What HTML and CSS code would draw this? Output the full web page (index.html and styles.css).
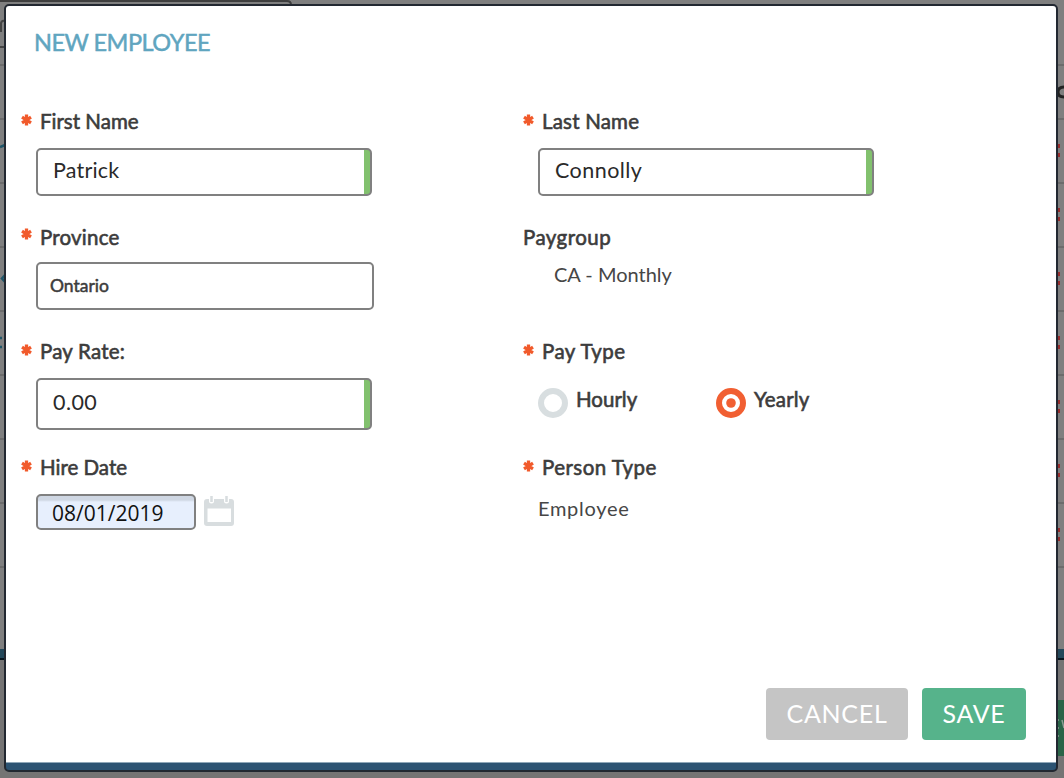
FILE: index.html
```html
<!DOCTYPE html>
<html lang="en">
<head>
<meta charset="utf-8">
<title>New Employee</title>
<link rel="stylesheet" href="styles.css">
</head>
<body>
<svg class="symbols" aria-hidden="true">
  <symbol id="star" viewBox="0 0 11 12"><path d="M5.500 .5v11M1 3.200l9 5.600M10 3.200l-9 5.600" stroke="#f15a2b" stroke-width="3.300" fill="none"/></symbol>
</svg>

<svg class="backdrop" width="1064" height="778" aria-hidden="true">
  <rect width="1064" height="778" fill="#7f7f7f"/>
  <rect y="658" width="1064" height="120" fill="#757474"/>
  <path d="M0 1H287Q291 1 291 5" stroke="#3e3e3e" stroke-width="2" fill="none"/>
  <path d="M0 47H8" stroke="#444" stroke-width="2"/>
  <path d="M0 65H1064M0 119H1064M0 183H1064M0 247H1064M0 311H1064M0 375H1064M0 439H1064M0 503H1064M0 567H1064" stroke="#6c6c6c" stroke-width="2"/>
  <path d="M1 32V23Q2 20 5 21" stroke="#444" stroke-width="2" fill="none"/>
  <path d="M0 147L5 145M6 274L2 278.500L6 283" stroke="#1f5568" stroke-width="2.500" fill="none"/>
  <path d="M0 338h2M0 347h2" stroke="#1f5568" stroke-width="2.500"/>
  <path d="M1064 87Q1058 87 1058 92T1064 97" stroke="#222" stroke-width="3" fill="none"/>
  <path d="M1058 146h2M1058 155h2M1058 210h2M1058 219h2M1058 274h2M1058 283h2M1058 338h2M1058 347h2M1058 402h2M1058 411h2M1058 466h2M1058 475h2M1058 530h2M1058 539h2" stroke="#962d2d" stroke-width="4"/>
  <rect y="649" width="1064" height="9" fill="#23485a"/>
  <rect y="658" width="1064" height="2" fill="#07151e"/>
  <rect x="1050" y="700" width="14" height="56" fill="#2a6448"/>
  <path d="M1058 720h1M1058 728h1M1058 736h1M1062 720l2 8" stroke="#8b9b93" stroke-width="1.500"/>
</svg>

<main class="dialog">
  <h1 class="title">NEW EMPLOYEE</h1>
  <form class="form">
    <div class="field">
      <div class="label"><svg class="star"><use href="#star"/></svg><span>First Name</span></div>
      <div class="input valid"><span class="track-s">Patrick</span></div>
    </div>
    <div class="field">
      <div class="label"><svg class="star"><use href="#star"/></svg><span class="track-s">Last Name</span></div>
      <div class="input valid"><span class="track-m">Connolly</span></div>
    </div>
    <div class="field">
      <div class="label raised"><svg class="star"><use href="#star"/></svg><span class="track-s">Province</span></div>
      <div class="input select"><span>Ontario</span></div>
    </div>
    <div class="field">
      <div class="label optional"><span class="track-m">Paygroup</span></div>
      <div class="value group"><span>CA - Monthly</span></div>
    </div>
    <div class="field">
      <div class="label"><svg class="star"><use href="#star"/></svg><span class="track-s">Pay Rate:</span></div>
      <div class="input valid rate"><span class="track-m">0.00</span></div>
    </div>
    <div class="field">
      <div class="label"><svg class="star"><use href="#star"/></svg><span class="track-m">Pay Type</span></div>
      <div class="radios">
        <div class="option"><svg width="30" height="30"><circle cx="15" cy="15" r="12" fill="#fff" stroke="#d8dee0" stroke-width="6"/></svg><span>Hourly</span></div>
        <div class="option"><svg width="30" height="30"><circle cx="15" cy="15" r="12" fill="#fff" stroke="#f15f32" stroke-width="6"/><circle cx="15" cy="15" r="4.800" fill="#f15f32"/></svg><span class="track-s">Yearly</span></div>
      </div>
    </div>
    <div class="field">
      <div class="label"><svg class="star"><use href="#star"/></svg><span>Hire Date</span></div>
      <div class="date-row">
        <div class="input date"><span>08/01/2019</span></div>
        <svg class="calendar" width="30" height="30"><path fill="#d8dddf" fill-rule="evenodd" d="M3 3h2v2q0 2.500 2.500 2.500T10 5V3h10v2q0 2.500 2.500 2.500T25 5V3h2q3 0 3 3v21q0 3-3 3H3q-3 0-3-3V6q0-3 3-3zM3.500 12.500V26h23.500V12.500z"/><path d="M7.500 0v6M22.500 0v6" stroke="#d8dddf" stroke-width="2.500"/></svg>
      </div>
    </div>
    <div class="field">
      <div class="label"><svg class="star"><use href="#star"/></svg><span class="track-m">Person Type</span></div>
      <div class="value employee"><span class="track-l">Employee</span></div>
    </div>
  </form>
  <footer class="actions">
    <button class="button cancel">CANCEL</button>
    <button class="button save">SAVE</button>
  </footer>
</main>
</body>
</html>
```
FILE: styles.css
```css
* { box-sizing: border-box; }
body { margin: 0; width: 1064px; height: 778px; overflow: hidden; padding: 4px; font-family: Lato, sans-serif; color: #3c3c3c; }
.symbols { position: absolute; width: 0; height: 0; }
.backdrop { position: absolute; inset: 0; z-index: -1; }
.dialog { width: 1054px; height: 768px; border: 2px solid #222831; border-radius: 5px; background: linear-gradient(#8fa7b8 0 1px, #2c5372 1px) bottom / 100% 8px no-repeat, #fff; display: flex; flex-direction: column; }
.title { margin: 0; padding: 21px 0 0 28px; height: 102px; font-size: 23.5px; line-height: 30px; font-weight: 400; letter-spacing: -.5px; color: #60a5bf; -webkit-text-stroke: .5px #60a5bf; }
.form { display: grid; grid-template-columns: 502px 1fr; grid-template-rows: 116px 114px 116px 110px; }
.track-s { letter-spacing: .2px; }
.track-m { letter-spacing: .45px; }
.track-l { letter-spacing: .7px; }
.label { display: flex; align-items: center; height: 26px; padding-left: 15px; font-size: 20.5px; -webkit-text-stroke: .6px #3c3c3c; }
.label.optional { padding-left: 15px; }
.star { width: 11px; height: 12px; margin: 0 8px 2px 0; }
.raised .star { margin-bottom: 6px; }
.input { display: flex; align-items: center; width: 336px; height: 48px; margin: 14px 0 0 30px; padding: 0 0 4px 15px; border: 2px solid #808080; border-radius: 5px; font-size: 21.5px; color: #2a2a2a; }
.valid { background: linear-gradient(#82c16e, #82c16e) right / 6px 100% no-repeat; }
.select { width: 338px; margin-top: 12px; padding: 0 0 1px 12px; font-size: 17.5px; color: #3c3c3c; -webkit-text-stroke: .5px #3c3c3c; }
.rate { height: 52px; }
.value { height: 28px; line-height: 28px; font-size: 20px; color: #464646; }
.employee { margin: 14px 0 0 30px; }
.group { margin: 10px 0 0 46px; }
.radios { display: flex; margin: 24px 0 0 30px; }
.option { display: flex; gap: 8px; width: 178px; font-size: 20.5px; line-height: 23px; -webkit-text-stroke: .6px #3c3c3c; }
.date-row { display: flex; gap: 8px; margin: 14px 0 0 30px; }
.date { width: 160px; height: 36px; margin: 0; padding: 1px 0 0 14px; background: linear-gradient(#cfd7e3 0 4px, #e7effd 6px); font: 21px "Open Sans", sans-serif; color: #111; }
.calendar { margin-top: 2px; }
.actions { display: flex; justify-content: flex-end; gap: 14px; margin-top: 124px; padding-right: 30px; }
.button { height: 52px; padding: 0 0 3px; border: 0; border-radius: 4px; font: 25px Lato, sans-serif; letter-spacing: .7px; color: #fff; }
.cancel { width: 142px; background: #c5c5c5; }
.save { width: 104px; background: #56b38b; }
```
